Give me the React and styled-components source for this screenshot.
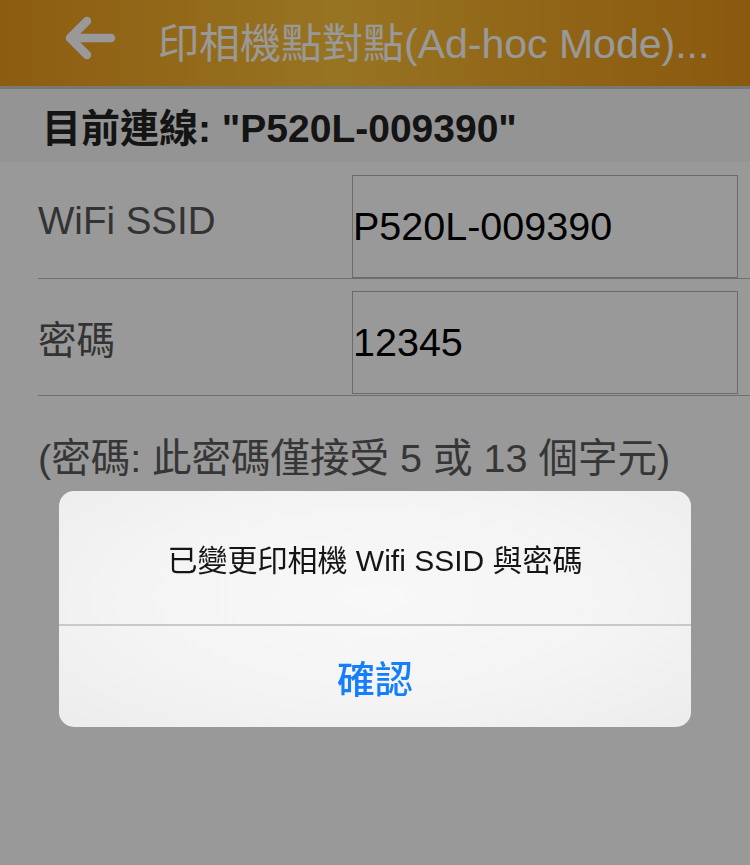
import React from 'react';
import styled, { createGlobalStyle } from 'styled-components';

const fontStack = '"Liberation Sans", "Noto Sans CJK TC", "Noto Sans CJK SC", sans-serif';

const GlobalStyle = createGlobalStyle`
  html, body {
    margin: 0;
    padding: 0;
    background: #ffffff;
    font-family: ${fontStack};
  }
  * { box-sizing: border-box; }
`;

const Page = styled.div`
  position: relative;
  width: 750px;
  min-height: 865px;
  background: #ffffff;
  overflow: hidden;
`;

const NavBar = styled.header`
  height: 89px;
  display: flex;
  align-items: center;
  padding: 0 0 6px 62px;
  background: linear-gradient(90deg, #ea9a1d 0%, #f7b52e 30%, #fcc23a 45%, #f2ab28 70%, #e7951a 100%);
  border-bottom: 3px solid #c8c8c8;
`;

const BackArrow = styled.svg`
  width: 56px;
  height: 52px;
  flex-shrink: 0;
`;

const Title = styled.h1`
  margin: 0 0 0 40px;
  font-size: 41px;
  font-weight: 400;
  color: #ffffff;
  white-space: nowrap;
`;

const StatusBand = styled.div`
  height: 73px;
  display: flex;
  align-items: center;
  padding: 0 0 2px 42px;
  background: #f7f7f7;
  font-size: 39px;
  font-weight: 700;
  color: #222;
`;

const Form = styled.div`
  padding-left: 38px;
`;

const FieldRow = styled.div`
  display: grid;
  grid-template-columns: 314px 386px;
  align-items: start;
  height: 117px;
  border-bottom: 1px solid #b8b8b8;
  padding-top: ${p => p.$first ? '13px' : '12px'};
`;

const Label = styled.div`
  height: 102px;
  display: flex;
  align-items: center;
  padding-bottom: 10px;
  font-size: 38.5px;
  color: #555;
`;

const Field = styled.input`
  width: 386px;
  height: 103px;
  margin: 0;
  padding: 0;
  border: 1px solid #b2b2b2;
  border-radius: 0;
  background: transparent;
  font-family: ${fontStack};
  font-size: 39.5px;
  color: #000;
  outline: none;
`;

const Hint = styled.p`
  margin: 30px 0 0 38px;
  font-size: 39.5px;
  color: #5a5a5a;
  white-space: nowrap;
`;

const Overlay = styled.div`
  position: fixed;
  inset: 0;
  background: rgba(0, 0, 0, 0.4);
  display: flex;
  flex-direction: column;
  align-items: center;
  padding-top: 491px;
`;

const Dialog = styled.div`
  width: 632px;
  border-radius: 15px;
  overflow: hidden;
  background: radial-gradient(ellipse at 50% 45%, #f8f8f8 0%, #f4f4f4 55%, #ececec 100%);
`;

const Message = styled.div`
  height: 133px;
  display: flex;
  align-items: center;
  justify-content: center;
  font-size: 30px;
  color: #151515;
`;

const ConfirmButton = styled.button`
  display: block;
  width: 100%;
  height: 103px;
  border: none;
  border-top: 2px solid #c9c8cd;
  background: transparent;
  font-family: ${fontStack};
  font-size: 38px;
  font-weight: 500;
  color: #157ffb;
  padding: 0;
  cursor: pointer;
`;

export default function App() {
  return (
    <>
      <GlobalStyle />
      <Page>
        <NavBar>
          <BackArrow viewBox="0 0 56 52">
            <path
              d="M49 24 H9 M25 7 L8 24 L25 41"
              fill="none"
              stroke="#ffffff"
              strokeWidth="8.5"
              strokeLinecap="round"
              strokeLinejoin="round"
            />
          </BackArrow>
          <Title>印相機點對點(Ad-hoc Mode)...</Title>
        </NavBar>
        <StatusBand>目前連線: "P520L-009390"</StatusBand>
        <Form>
          <FieldRow $first>
            <Label>WiFi SSID</Label>
            <Field readOnly defaultValue="P520L-009390" />
          </FieldRow>
          <FieldRow>
            <Label>密碼</Label>
            <Field readOnly defaultValue="12345" />
          </FieldRow>
        </Form>
        <Hint>(密碼: 此密碼僅接受 5 或 13 個字元)</Hint>
        <Overlay>
          <Dialog>
            <Message>已變更印相機 Wifi SSID 與密碼</Message>
            <ConfirmButton>確認</ConfirmButton>
          </Dialog>
        </Overlay>
      </Page>
    </>
  );
}
